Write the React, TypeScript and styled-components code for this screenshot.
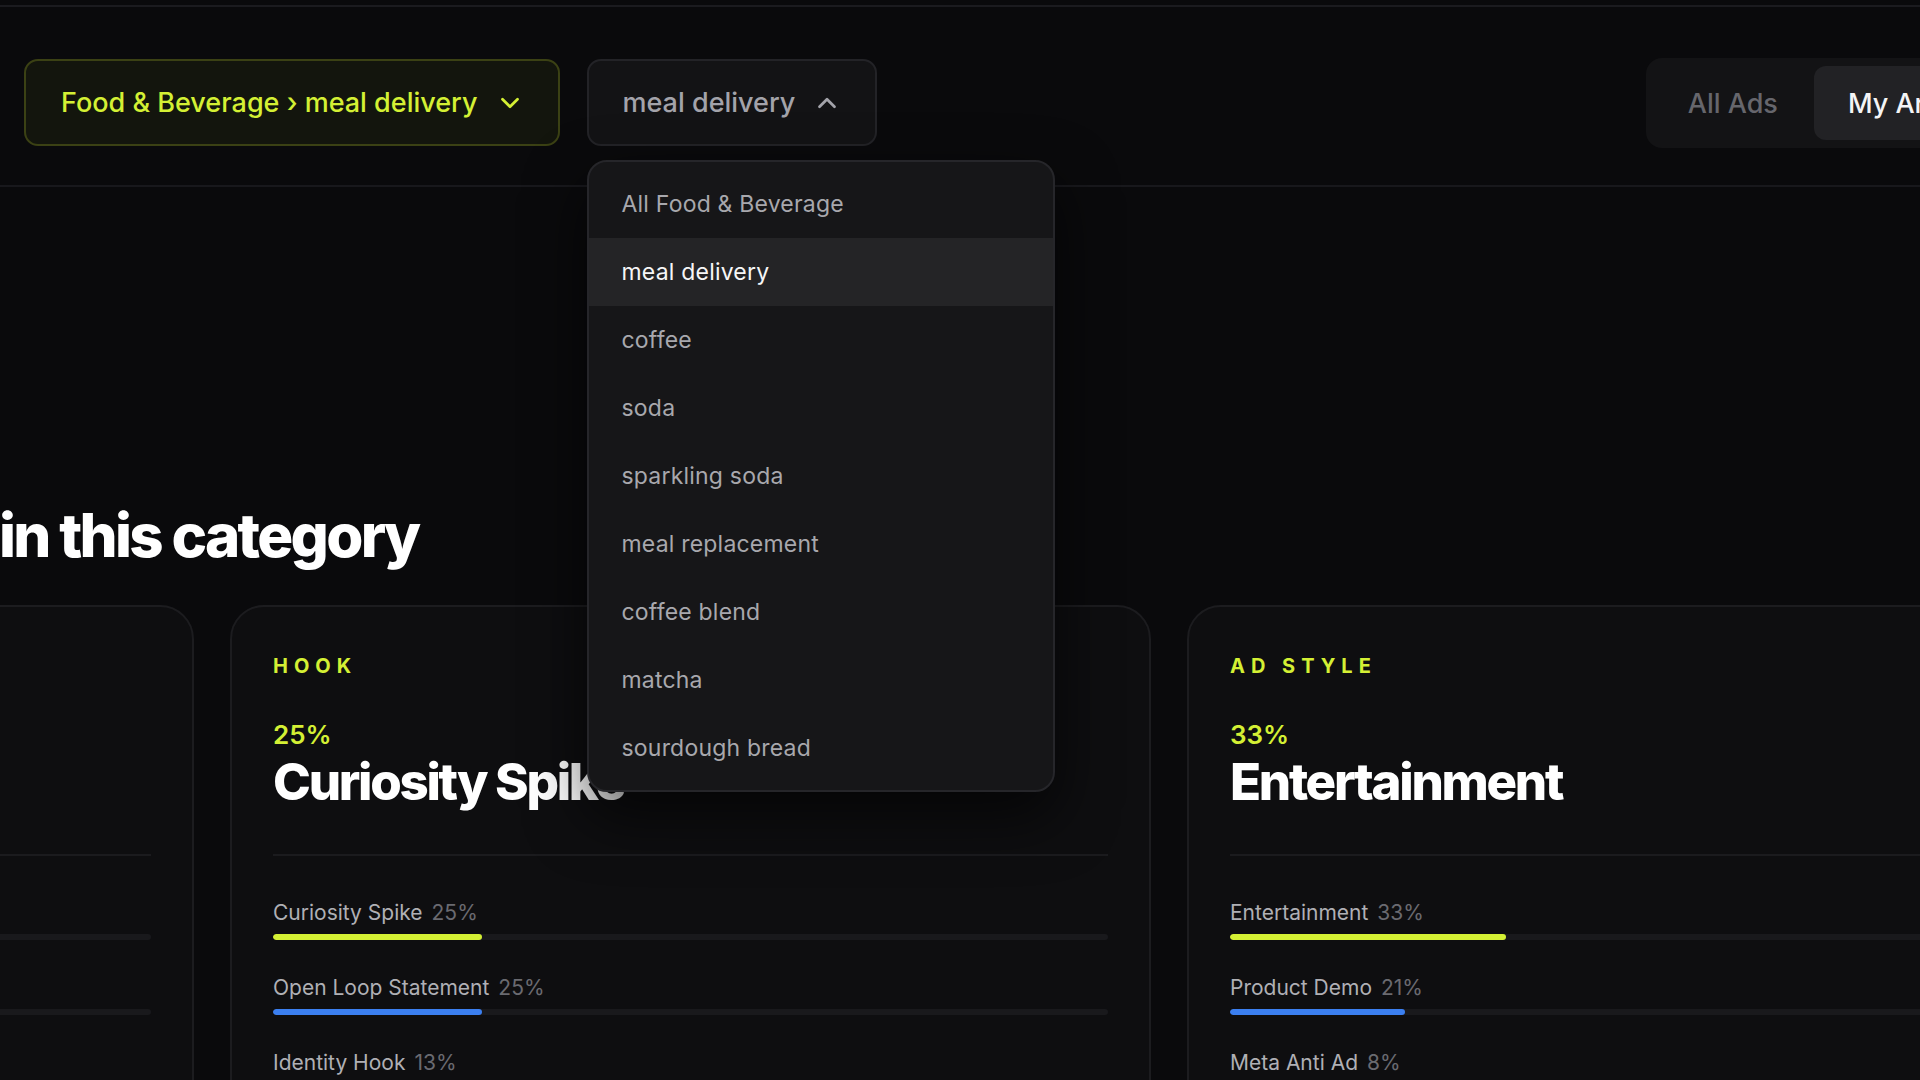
import React from 'react';
import styled, { createGlobalStyle } from 'styled-components';
import { ChevronDown, ChevronUp } from 'lucide-react';

const GlobalStyle = createGlobalStyle`
  html, body {
    margin: 0;
    padding: 0;
    background: #0a0a0c;
    overflow: hidden;
  }
  * {
    box-sizing: border-box;
  }
  body {
    font-family: Inter, "Liberation Sans", sans-serif;
    color: #f4f4f5;
  }
`;

const LIME = '#d4f034';
const BLUE = '#3b7ff0';

const Frame = styled.div`
  width: 1920px;
  height: 1080px;
  overflow: hidden;
  padding-top: 5px;
`;

const Header = styled.header`
  display: flex;
  align-items: flex-start;
  gap: 27px;
  padding: 52px 0 37px 24px;
  border-top: 2px solid #1b1b1f;
  border-bottom: 2px solid #18181c;
  position: relative;
  z-index: 5;
`;

const SelectWrap = styled.div`
  position: relative;
`;

const SelectButton = styled.button<{ $accent?: boolean }>`
  display: flex;
  align-items: center;
  gap: 17px;
  height: 87px;
  padding: 0 33px 0 ${(p) => (p.$accent ? '35px' : '34px')};
  border-radius: 14px;
  border: 2px solid ${(p) => (p.$accent ? '#3b4114' : '#232327')};
  background: ${(p) => (p.$accent ? '#13150d' : '#131315')};
  color: ${(p) => (p.$accent ? LIME : '#a3a3aa')};
  font-family: Inter, "Liberation Sans", sans-serif;
  font-size: 27px;
  font-weight: 500;
  cursor: pointer;

  svg {
    flex-shrink: 0;
  }
`;

const Menu = styled.div`
  position: absolute;
  top: calc(100% + 14px);
  left: 0;
  width: 468px;
  padding: 8px 0;
  background: #161618;
  border: 2px solid #26262a;
  border-radius: 20px;
  box-shadow: 0 24px 60px rgba(0, 0, 0, 0.65);
  overflow: hidden;
`;

const MenuItem = styled.div<{ $active?: boolean }>`
  height: 68px;
  display: flex;
  align-items: center;
  padding-left: 33px;
  font-size: 23px;
  letter-spacing: 0.2px;
  background: ${(p) => (p.$active ? '#242426' : 'transparent')};
  color: ${(p) => (p.$active ? '#f6f6f7' : '#a8a8ad')};
`;

const Toggle = styled.div`
  display: flex;
  gap: 2px;
  margin: -1px -116px 0 auto;
  padding: 8px;
  height: 90px;
  background: #131315;
  border-radius: 16px;
`;

const ToggleOption = styled.div<{ $active?: boolean }>`
  display: flex;
  align-items: center;
  padding: 0 34px;
  border-radius: 12px;
  font-size: 27px;
  font-weight: 500;
  white-space: nowrap;
  background: ${(p) => (p.$active ? '#222225' : 'transparent')};
  color: ${(p) => (p.$active ? '#f4f4f5' : '#66666c')};
`;

const Heading = styled.h2`
  margin: 315px 0 0 -1px;
  font-size: 60px;
  line-height: 66px;
  font-weight: 800;
  letter-spacing: -0.045em;
  color: #ffffff;
  white-space: nowrap;
`;

const CardRow = styled.div`
  display: grid;
  grid-template-columns: repeat(3, 921px);
  gap: 36px;
  margin: 37px 0 0 -727px;
`;

const Card = styled.section`
  height: 700px;
  padding: 47px 41px 0;
  background: #0e0e10;
  border: 2px solid #1c1c1f;
  border-radius: 34px;
`;

const Kicker = styled.div`
  font-size: 20px;
  line-height: 24px;
  font-weight: 700;
  letter-spacing: 0.3em;
  color: ${LIME};
`;

const Share = styled.div`
  margin-top: 41px;
  font-size: 26px;
  line-height: 32px;
  font-weight: 600;
  color: ${LIME};
`;

const Winner = styled.div`
  margin-top: 1px;
  font-size: 51px;
  line-height: 60px;
  font-weight: 800;
  letter-spacing: -0.045em;
  color: #ffffff;
  white-space: nowrap;
`;

const Divider = styled.div`
  margin-top: 42px;
  height: 2px;
  background: #1b1b1e;
`;

const BarList = styled.div`
  margin-top: 45px;
  display: flex;
  flex-direction: column;
  gap: 36px;
`;

const BarRow = styled.div`
  display: flex;
  flex-direction: column;
  gap: 9px;
`;

const BarLabel = styled.div`
  display: flex;
  gap: 9px;
  font-size: 21px;
  line-height: 24px;
  color: #b0b0b5;
  white-space: nowrap;

  span {
    color: #6a6a70;
  }
`;

const Track = styled.div`
  height: 6px;
  border-radius: 3px;
  background: #19191c;
  overflow: hidden;
`;

const Fill = styled.div<{ $color: string }>`
  height: 100%;
  border-radius: 3px;
  background: ${(p) => p.$color};
`;

type Bar = { name: string; pct: number; color: string };

type Insight = {
  kicker: string;
  pct: number;
  winner: string;
  bars: Bar[];
};

const insights: Insight[] = [
  {
    kicker: 'FORMAT',
    pct: 29,
    winner: 'UGC Testimonial',
    bars: [
      { name: 'UGC Testimonial', pct: 29, color: LIME },
      { name: 'Talking Head', pct: 24, color: BLUE },
      { name: 'Voiceover B-Roll', pct: 17, color: '#8b5cf6' },
      { name: 'Static Image', pct: 11, color: '#8b5cf6' },
    ],
  },
  {
    kicker: 'HOOK',
    pct: 25,
    winner: 'Curiosity Spike',
    bars: [
      { name: 'Curiosity Spike', pct: 25, color: LIME },
      { name: 'Open Loop Statement', pct: 25, color: BLUE },
      { name: 'Identity Hook', pct: 13, color: '#8b5cf6' },
      { name: 'Bold Claim', pct: 10, color: '#8b5cf6' },
    ],
  },
  {
    kicker: 'AD STYLE',
    pct: 33,
    winner: 'Entertainment',
    bars: [
      { name: 'Entertainment', pct: 33, color: LIME },
      { name: 'Product Demo', pct: 21, color: BLUE },
      { name: 'Meta Anti Ad', pct: 8, color: '#8b5cf6' },
      { name: 'Problem Solution', pct: 6, color: '#8b5cf6' },
    ],
  },
];

const subcategories = [
  'All Food & Beverage',
  'meal delivery',
  'coffee',
  'soda',
  'sparkling soda',
  'meal replacement',
  'coffee blend',
  'matcha',
  'sourdough bread',
];

export default function App(): JSX.Element {
  const selected = 'meal delivery';

  return (
    <Frame>
      <GlobalStyle />
      <Header>
        <SelectButton $accent>
          Food &amp; Beverage › meal delivery
          <ChevronDown size={30} strokeWidth={2.2} />
        </SelectButton>
        <SelectWrap>
          <SelectButton>
            {selected}
            <ChevronUp size={30} strokeWidth={2.2} />
          </SelectButton>
          <Menu>
            {subcategories.map((s) => (
              <MenuItem key={s} $active={s === selected}>
                {s}
              </MenuItem>
            ))}
          </Menu>
        </SelectWrap>
        <Toggle>
          <ToggleOption>All Ads</ToggleOption>
          <ToggleOption $active>My Archive</ToggleOption>
        </Toggle>
      </Header>

      <Heading>in this category</Heading>

      <CardRow>
        {insights.map((card) => (
          <Card key={card.kicker}>
            <Kicker>{card.kicker}</Kicker>
            <Share>{card.pct}%</Share>
            <Winner>{card.winner}</Winner>
            <Divider />
            <BarList>
              {card.bars.map((b) => (
                <BarRow key={b.name}>
                  <BarLabel>
                    {b.name}
                    <span>{b.pct}%</span>
                  </BarLabel>
                  <Track>
                    <Fill $color={b.color} style={{ width: `${b.pct}%` }} />
                  </Track>
                </BarRow>
              ))}
            </BarList>
          </Card>
        ))}
      </CardRow>
    </Frame>
  );
}
